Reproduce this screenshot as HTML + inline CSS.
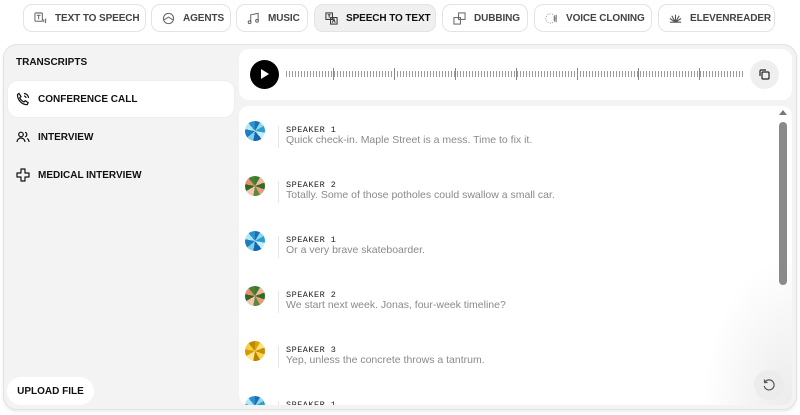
<!DOCTYPE html>
<html><head><style>
*{box-sizing:border-box;margin:0;padding:0}
body{width:800px;height:415px;background:#fff;font-family:"Liberation Sans",sans-serif;position:relative;overflow:hidden}
.tab{position:absolute;top:4px;height:28px;border:1px solid #e3e3e3;border-radius:9px;background:#fff;font-weight:bold;font-size:10px;color:#444;display:flex;align-items:center;padding-left:10px;gap:8px;white-space:nowrap;letter-spacing:-.1px}
.tab svg{width:13px;height:13px;flex:none}
.panel{position:absolute;left:3px;top:44px;width:794px;height:366px;background:#f3f3f3;border:1px solid #e2e2e2;border-radius:14px;box-shadow:0 2px 3px rgba(0,0,0,.08)}
.side{position:absolute;font-weight:bold;font-size:10px;color:#111;display:flex;align-items:center;gap:8px;white-space:nowrap}
.side svg{width:14px;height:14px}
.card{position:absolute;background:#fff;border-radius:10px}
.ent{position:absolute;left:245px}
.av{position:absolute;left:0;top:-5px;width:20px;height:20px;border-radius:50%}
.ln{position:absolute;left:33px;top:0;width:1px;height:22px;background:#e6e6e6}
.sp{position:absolute;left:41px;top:-1px;font-family:"Liberation Mono",monospace;font-size:8.5px;color:#222;letter-spacing:.5px;white-space:nowrap}
.tx{position:absolute;left:41px;top:8px;font-size:10.5px;color:#8a8a8a;white-space:nowrap}
.a1{background:conic-gradient(#1b6fb8 0 30deg,#8fd8ea 30deg 60deg,#2a9fd0 60deg 100deg,#c8eef5 100deg 140deg,#1565b0 140deg 190deg,#7fd0e6 190deg 230deg,#1f7cc0 230deg 280deg,#b5e6f0 280deg 320deg,#2c8fd0 320deg)}
.a2{background:conic-gradient(#3b7a2a 0 30deg,#f0b8a0 30deg 70deg,#2f6e20 70deg 110deg,#e79a80 110deg 150deg,#5a8a3a 150deg 190deg,#f4c4b0 190deg 240deg,#2d6a1e 240deg 280deg,#e59070 280deg 320deg,#4a7f30 320deg)}
.a3{background:conic-gradient(#d9a400 0 30deg,#fbe080 30deg 70deg,#c89000 70deg 110deg,#f8d650 110deg 150deg,#b88200 150deg 190deg,#fde690 190deg 240deg,#d49c00 240deg 280deg,#f6cf40 280deg 320deg,#c08a00 320deg)}
</style></head><body>
<div class="tab" style="left:23px;width:123px"><svg viewBox="0 0 14 14" fill="none" stroke="#666" stroke-width="1.1"><rect x="1" y="1" width="8" height="9" rx="1"/><path d="M3 3.5h4M5 3.5v4.5M10.5 8v3M12.5 7v5"/></svg>TEXT TO SPEECH</div>
<div class="tab" style="left:151px;width:80px"><svg viewBox="0 0 14 14" fill="none" stroke="#666" stroke-width="1.1"><circle cx="7" cy="7" r="5.5"/><path d="M2 8.5l5-3 5 3"/></svg>AGENTS</div>
<div class="tab" style="left:236px;width:72px"><svg viewBox="0 0 14 14" fill="none" stroke="#666" stroke-width="1.1"><path d="M4 11V3l8-1.5v8"/><circle cx="2.8" cy="11" r="1.5"/><circle cx="10.8" cy="9.5" r="1.5"/></svg>MUSIC</div>
<div class="tab" style="left:314px;width:122px;background:#f0f0f0;color:#111"><svg viewBox="0 0 14 14" fill="none" stroke="#333" stroke-width="1.1"><rect x="1" y="1" width="7" height="7"/><rect x="6" y="6" width="7" height="7"/><path d="M3 3h3M4.5 3v3M8 11.5l1.5-4 1.5 4"/></svg>SPEECH TO TEXT</div>
<div class="tab" style="left:442px;width:86px"><svg viewBox="0 0 14 14" fill="none" stroke="#666" stroke-width="1.1"><rect x="1" y="6" width="7" height="7"/><rect x="6" y="1" width="7" height="7"/></svg>DUBBING</div>
<div class="tab" style="left:534px;width:118px"><svg viewBox="0 0 14 14" fill="none" stroke="#999" stroke-width="1.1" stroke-dasharray="1 1.5"><circle cx="6" cy="7" r="5"/><path d="M10 4v6M12 3v8" stroke-dasharray="none" stroke="#666"/></svg>VOICE CLONING</div>
<div class="tab" style="left:658px;width:117px"><svg viewBox="0 0 14 14" fill="none" stroke="#555" stroke-width="1.2"><path d="M7 11V3M7 11L3 4M7 11l4-7M7 11L1 7M7 11l6-4M1 11h12"/></svg>ELEVENREADER</div>

<div class="panel"></div>
<div style="position:absolute;left:16px;top:57px;font-weight:bold;font-size:10px;color:#111">TRANSCRIPTS</div>
<div class="card" style="left:8px;top:81px;width:226px;height:36px;box-shadow:0 0 0 1px #eee"></div>
<div class="side" style="left:16px;top:92px"><svg viewBox="0 0 14 14" fill="none" stroke="#111" stroke-width="1.2"><path d="M3 1.5l2 3-1.3 1.3c.8 1.8 2.3 3.3 4.2 4.2L9.2 8.7l3 2-1 2C6 12.7 1.3 8 1.5 2.5z"/><path d="M8 1.5a4.5 4.5 0 014.5 4.5M8 4a2 2 0 012 2"/></svg>CONFERENCE CALL</div>
<div class="side" style="left:16px;top:130px"><svg viewBox="0 0 14 14" fill="none" stroke="#111" stroke-width="1.2"><circle cx="5" cy="4.5" r="2.3"/><path d="M1 12a4 4 0 018 0M9 2.3a2.3 2.3 0 010 4.5M11 8.5a4 4 0 012 3.5"/></svg>INTERVIEW</div>
<div class="side" style="left:16px;top:168px"><svg viewBox="0 0 14 14" fill="none" stroke="#111" stroke-width="1.2"><path d="M5 1h4v4h4v4H9v4H5V9H1V5h4z" stroke-linejoin="round"/></svg>MEDICAL INTERVIEW</div>
<div class="card" style="left:7px;top:377px;width:87px;height:28px;border-radius:14px;font-weight:bold;font-size:10px;color:#111;display:flex;align-items:center;justify-content:center">UPLOAD FILE</div>

<div class="card" style="left:239px;top:49px;width:553px;height:51px"></div>
<div style="position:absolute;left:250px;top:60px;width:29px;height:29px;border-radius:50%;background:#000"></div>
<div style="position:absolute;left:261px;top:69px;width:0;height:0;border-left:8px solid #fff;border-top:5.5px solid transparent;border-bottom:5.5px solid transparent"></div>
<div style="position:absolute;left:286px;top:71px;width:459px;height:6px;background:repeating-linear-gradient(90deg,#999 0 1px,transparent 1px 3px)"></div>
<div style="position:absolute;left:286px;top:68px;width:459px;height:12px;background:repeating-linear-gradient(90deg,transparent 0 47px,#888 47px 48px,transparent 48px 61px)"></div>
<div style="position:absolute;left:750px;top:60px;width:29px;height:29px;border-radius:50%;background:#efefef"></div>
<svg style="position:absolute;left:758px;top:68px" width="13" height="13" viewBox="0 0 13 13" fill="none" stroke="#222" stroke-width="1.2"><rect x="4" y="4" width="7" height="7" rx="1"/><path d="M2 8V3a1 1 0 011-1h5"/></svg>

<div class="card" style="left:239px;top:106px;width:553px;height:299px;overflow:hidden">
<div style="position:absolute;right:0;bottom:0;width:90px;height:150px;background:radial-gradient(ellipse at 100% 100%,rgba(0,0,0,.08),transparent 70%)"></div>
</div>
<div style="position:absolute;left:779px;top:110px;width:0;height:0;border-bottom:5px solid #777;border-left:4px solid transparent;border-right:4px solid transparent"></div>
<div style="position:absolute;left:779px;top:122px;width:8px;height:163px;border-radius:4px;background:#8a8a8a"></div>

<div class="ent" style="top:126px"><div class="av a1"></div><div class="ln"></div><div class="sp">SPEAKER 1</div><div class="tx">Quick check-in. Maple Street is a mess. Time to fix it.</div></div>
<div class="ent" style="top:181px"><div class="av a2"></div><div class="ln"></div><div class="sp">SPEAKER 2</div><div class="tx">Totally. Some of those potholes could swallow a small car.</div></div>
<div class="ent" style="top:236px"><div class="av a1"></div><div class="ln"></div><div class="sp">SPEAKER 1</div><div class="tx">Or a very brave skateboarder.</div></div>
<div class="ent" style="top:291px"><div class="av a2"></div><div class="ln"></div><div class="sp">SPEAKER 2</div><div class="tx">We start next week. Jonas, four-week timeline?</div></div>
<div class="ent" style="top:346px"><div class="av a3"></div><div class="ln"></div><div class="sp">SPEAKER 3</div><div class="tx">Yep, unless the concrete throws a tantrum.</div></div>
<div style="position:absolute;left:239px;top:395px;width:553px;height:10px;overflow:hidden">
<div class="ent" style="top:6px;left:6px"><div class="av a1"></div><div class="ln"></div><div class="sp">SPEAKER 1</div></div></div>

<div style="position:absolute;left:754px;top:370px;width:30px;height:30px;border-radius:50%;background:#ececec"></div>
<svg style="position:absolute;left:762px;top:378px" width="14" height="14" viewBox="0 0 14 14" fill="none" stroke="#555" stroke-width="1.2"><path d="M3 4a5 5 0 11-.8 4"/><path d="M2.5 1.5V4.5H5.5"/></svg>
</body></html>
